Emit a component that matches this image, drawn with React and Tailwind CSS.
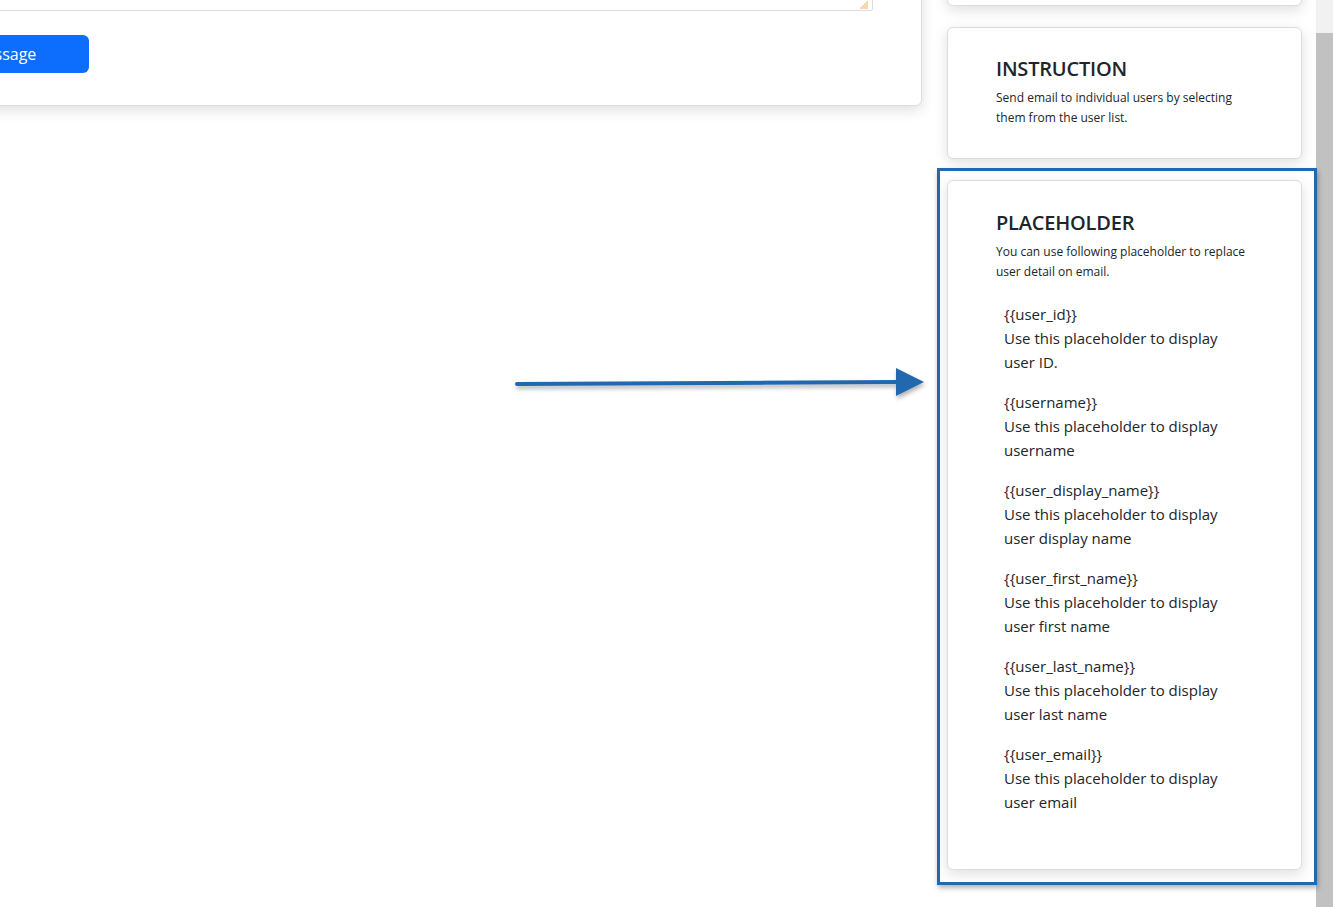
import React from 'react';

const placeholders = [
    { tag: '{{user_id}}', text: 'Use this placeholder to display user ID.' },
    { tag: '{{username}}', text: 'Use this placeholder to display username' },
    { tag: '{{user_display_name}}', text: 'Use this placeholder to display user display name' },
    { tag: '{{user_first_name}}', text: 'Use this placeholder to display user first name' },
    { tag: '{{user_last_name}}', text: 'Use this placeholder to display user last name' },
    { tag: '{{user_email}}', text: 'Use this placeholder to display user email' },
];

const card = 'bg-white border border-[#dcdcdc] rounded-[6px] shadow-[0_4px_14px_rgba(0,0,0,0.13)]';

const ResizeGrip = () => (
    <svg width="10" height="8" viewBox="0 0 10 8" className="absolute right-[3px] bottom-[1px]">
        <path d="M7 1h2M5 3h4M3 5h6M1 7h8" stroke="#f0b060" strokeWidth="1" />
    </svg>
);

const Arrow = () => (
    <svg width="440" height="50" viewBox="0 0 440 50" className="absolute left-[505px] top-[358px] pointer-events-none">
        <defs>
            <filter id="sh" x="-10%" y="-50%" width="120%" height="200%">
                <feDropShadow dx="1" dy="3" stdDeviation="2" floodColor="#000" floodOpacity="0.3" />
            </filter>
        </defs>
        <g filter="url(#sh)">
            <line x1="12" y1="26" x2="395" y2="24" stroke="#2168ae" strokeWidth="4" strokeLinecap="round" />
            <polygon points="391,10 419,24 391,38" fill="#2168ae" />
        </g>
    </svg>
);

export default function App() {
    return (
        <div className="relative w-[1333px] h-[907px] overflow-hidden bg-white text-[#212529]"
            style={{ fontFamily: '"Open Sans", "Noto Sans", Arial, sans-serif' }}>
            <div className="flex items-start h-full">
                {/* left form card */}
                <div className={`${card} ml-[-172px] mt-[-150px] w-[1094px] px-[48px] pt-[40px] pb-[32px] shrink-0`}>
                    <div className="relative h-[120px] border border-[#dcdcdc] rounded-[2px]">
                        <ResizeGrip />
                    </div>
                    <button className="mt-[24px] w-[212px] h-[38px] flex items-center justify-center rounded-[6px] bg-[#0d6efd] text-white text-[16px]">
                        Send Message
                    </button>
                </div>

                {/* right column */}
                <div className="ml-[25px] w-[355px] shrink-0 flex flex-col gap-[21px] mt-[-100px]">
                    <div className={`${card} h-[106px]`} />

                    <div className={`${card} px-[48px] pt-[28px] pb-[30px]`}>
                        <h3 className="text-[20px] font-semibold leading-[26px] tracking-[-0.2px]">INSTRUCTION</h3>
                        <p className="mt-[6px] text-[12px] leading-[20px]">
                            Send email to individual users by selecting them from the user list.
                        </p>
                    </div>

                    <div className={`${card} px-[48px] pt-[29px] pb-[55px]`}>
                        <h3 className="text-[20px] font-semibold leading-[26px] tracking-[-0.2px]">PLACEHOLDER</h3>
                        <p className="mt-[6px] text-[12px] leading-[20px]">
                            You can use following placeholder to replace user detail on email.
                        </p>
                        <ul className="mt-[20px] pl-[8px] flex flex-col gap-[16px]">
                            {placeholders.map((p) => (
                                <li key={p.tag} className="w-[236px] text-[15px] leading-[24px]">
                                    <div>{p.tag}</div>
                                    <div>{p.text}</div>
                                </li>
                            ))}
                        </ul>
                    </div>
                </div>

                {/* scrollbar */}
                <div className="ml-auto w-[17px] h-full bg-[#f1f1f1] flex flex-col shrink-0">
                    <div className="h-[33px]" />
                    <div className="flex-1 bg-[#c1c1c1]" />
                </div>
            </div>

            {/* annotation */}
            <div className="absolute left-[937px] top-[168px] w-[380px] h-[717px] border-[3px] border-[#2168ae] shadow-[1px_3px_5px_rgba(0,0,0,0.3)] pointer-events-none" />
            <Arrow />
        </div>
    );
}
